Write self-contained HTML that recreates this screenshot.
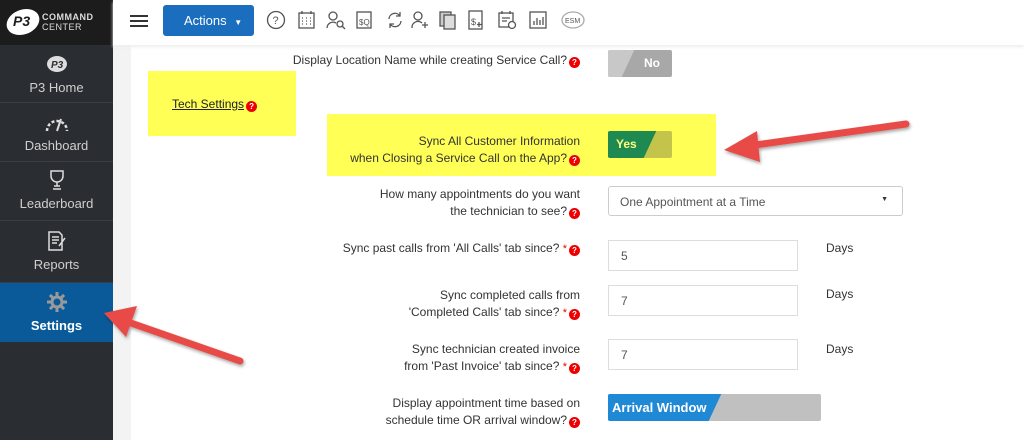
<!DOCTYPE html>
<html><head><meta charset="utf-8">
<style>
*{margin:0;padding:0;box-sizing:border-box}
body{width:1024px;height:440px;overflow:hidden;background:#fff;font-family:"Liberation Sans",sans-serif;position:relative;color:#333}
.a{position:absolute}
#side{left:0;top:0;width:113px;height:440px;background:#2a2d31}
#logo{left:0;top:0;width:113px;height:45px;background:#1c1c1c}
.nav{position:absolute;left:0;width:113px;text-align:center;color:#cfcfcf;font-size:13px;border-bottom:1px solid #3a3d42}
.nav svg{display:block;margin:0 auto}
#gray{left:113px;top:45px;width:18px;height:395px;background:#f3f3f3}
#hdr{left:113px;top:0;width:911px;height:45px;background:#fff;box-shadow:0 2px 3px #eee}
.lbl{position:absolute;text-align:right;font-size:12px;color:#333;line-height:17px;width:440px}
.q{display:inline-block;width:11px;height:11px;border-radius:50%;background:#e00;color:#fff;font-size:8px;line-height:11px;text-align:center;font-weight:bold;vertical-align:-1px;margin-left:2px}
.st{color:#e00;font-size:11px}
.inp{position:absolute;left:608px;width:190px;height:31px;border:1px solid #ddd;font-size:12px;color:#555;padding:8px 12px}
.days{position:absolute;left:826px;font-size:12px}
.ic{position:absolute;top:10px;stroke:#555;fill:none;stroke-width:1.3}
</style></head><body>
<div id="side" class="a"></div>
<div id="logo" class="a">
<div class="a" style="left:7px;top:9px;width:32px;height:26px;border-radius:50%;background:#fff;transform:skewX(-15deg)"></div>
<div class="a" style="left:13px;top:13px;font-size:14px;font-weight:bold;font-style:italic;color:#1c1c1c">P3</div>
<div class="a" style="left:42px;top:12px;font-size:9px;color:#ddd;font-weight:bold;letter-spacing:0.5px;line-height:10px">COMMAND<br><span style="font-weight:normal">CENTER</span></div>
</div>
<div class="nav" style="top:45px;height:58px"><svg width="24" height="22" style="margin-top:8px"><ellipse cx="12" cy="11" rx="10" ry="8" fill="#ddd"/><text x="6" y="15" font-size="10" font-weight="bold" fill="#2a2d31" font-style="italic">P3</text></svg><div style="margin-top:5px">P3 Home</div></div>
<div class="nav" style="top:103px;height:59px"><svg width="26" height="22" style="margin-top:8px"><path d="M3 20 A10 10 0 0 1 23 20" stroke="#ddd" stroke-width="2.5" fill="none" stroke-dasharray="3 2"/><path d="M13 20 L17 8" stroke="#ddd" stroke-width="2"/></svg><div style="margin-top:5px">Dashboard</div></div>
<div class="nav" style="top:162px;height:59px"><svg width="20" height="22" style="margin-top:7px"><path d="M4 2h12v5a6 6 0 0 1-12 0z M10 13v4 M6 20h8 M7 17h6" stroke="#ddd" stroke-width="1.5" fill="none"/></svg><div style="margin-top:5px">Leaderboard</div></div>
<div class="nav" style="top:221px;height:62px"><svg width="22" height="22" style="margin-top:9px"><path d="M3 2h10l3 3v15H3z M6 7h7 M6 10h7 M6 13h5 M13 16l6-8" stroke="#ddd" stroke-width="1.5" fill="none"/></svg><div style="margin-top:5px">Reports</div></div>
<div class="nav" style="top:283px;height:59px;background:#0a5a99;color:#fff;border:none"><svg width="22" height="22" style="margin-top:8px"><g fill="#999"><circle cx="11" cy="11" r="6.5"/><rect x="9.5" y="1" width="3" height="20"/><rect x="1" y="9.5" width="20" height="3"/><rect x="9.5" y="1" width="3" height="20" transform="rotate(45 11 11)"/><rect x="9.5" y="1" width="3" height="20" transform="rotate(-45 11 11)"/></g><circle cx="11" cy="11" r="3.5" fill="#0a5a99"/></svg><div style="margin-top:5px;font-weight:bold">Settings</div></div>
<div id="gray" class="a"></div>
<div id="hdr" class="a"></div>
<div class="a" style="left:130px;top:15px;width:18px;height:2px;background:#333;box-shadow:0 5px 0 #333,0 10px 0 #333"></div>
<div class="a" style="left:163px;top:5px;width:91px;height:31px;background:#1a6ebd;border-radius:3px;color:#fff;font-size:13px;line-height:31px;padding-left:21px">Actions <span style="font-size:8px;margin-left:4px">▼</span></div>
<svg class="ic" style="left:266px" width="20" height="20"><circle cx="10" cy="10" r="8.5"/><text x="6.5" y="14" font-size="11" fill="#555" stroke="none">?</text></svg>
<svg class="ic" style="left:297px" width="20" height="20"><rect x="2" y="3" width="15" height="15"/><path d="M5 1v3M14 1v3M5 8h1M9 8h1M13 8h1M5 11h1M9 11h1M13 11h1M5 14h1M9 14h1M13 14h1"/></svg>
<svg class="ic" style="left:326px" width="20" height="20"><circle cx="7" cy="6" r="4"/><path d="M1 18a6 6 0 0 1 9-5"/><circle cx="14" cy="14" r="3"/><path d="M16 16l3 3"/></svg>
<svg class="ic" style="left:355px" width="20" height="20"><rect x="2" y="2" width="14" height="16"/><text x="4" y="15" font-size="8" fill="#555" stroke="none">$Q</text></svg>
<svg class="ic" style="left:385px" width="20" height="20"><path d="M4 9a6 6 0 0 1 11-3M16 11a6 6 0 0 1-11 3M15 2v4h-4M5 18v-4h4"/></svg>
<svg class="ic" style="left:410px" width="20" height="20"><circle cx="8" cy="6" r="4"/><path d="M2 18a6 6 0 0 1 10-5M15 12v6M12 15h6"/></svg>
<svg class="ic" style="left:438px" width="20" height="20"><rect x="2" y="2" width="11" height="14" fill="#ccc"/><rect x="6" y="5" width="11" height="14" fill="#ddd"/></svg>
<svg class="ic" style="left:467px" width="20" height="20"><rect x="2" y="1" width="13" height="18"/><text x="4" y="15" font-size="9" fill="#555" stroke="none">$</text><path d="M12 12v5M10 14.5h5"/></svg>
<svg class="ic" style="left:497px" width="20" height="20"><rect x="2" y="3" width="14" height="14"/><path d="M5 1v3M13 1v3M5 8h8M5 11h5"/><circle cx="15" cy="15" r="3.5" fill="#fff"/></svg>
<svg class="ic" style="left:528px" width="20" height="20"><rect x="2" y="2" width="16" height="16"/><path d="M6 15v-4M9 15v-7M12 15v-5M15 15v-8"/></svg>
<svg class="ic" style="left:560px" width="26" height="20"><ellipse cx="13" cy="10" rx="11" ry="8" stroke="#aaa"/><text x="5" y="13" font-size="7" fill="#555" stroke="none">ESM</text></svg>

<div class="lbl" style="left:140px;top:52px">Display Location Name while creating Service Call?<span class="q">?</span></div>
<div class="a" style="left:608px;top:50px;width:64px;height:27px;background:#a8a8a8;border-radius:2px;overflow:hidden"><div class="a" style="left:-10px;top:0;width:30px;height:27px;background:#c8c8c8;transform:skewX(-25deg)"></div><div class="a" style="left:36px;top:6px;color:#fff;font-weight:bold;font-size:12px">No</div></div>

<div class="a" style="left:148px;top:71px;width:148px;height:65px;background:#ffff55"></div>
<div class="a" style="left:172px;top:97px;font-size:12px;text-decoration:underline;color:#222">Tech Settings<span class="q" style="text-decoration:none">?</span></div>

<div class="a" style="left:327px;top:114px;width:389px;height:62px;background:#ffff55"></div>
<div class="lbl" style="left:140px;top:133px">Sync All Customer Information<br>when Closing a Service Call on the App?<span class="q">?</span></div>
<div class="a" style="left:608px;top:131px;width:64px;height:27px;background:#c5c44a;border-radius:2px;overflow:hidden"><div class="a" style="left:-10px;top:0;width:52px;height:27px;background:#1e8a52;transform:skewX(-25deg)"></div><div class="a" style="left:8px;top:6px;color:#ffff80;font-weight:bold;font-size:12px">Yes</div></div>

<div class="lbl" style="left:140px;top:186px">How many appointments do you want<br>the technician to see?<span class="q">?</span></div>
<div class="a" style="left:608px;top:186px;width:295px;height:30px;border:1px solid #ccc;border-radius:3px;font-size:12px;color:#555;padding:8px 11px">One Appointment at a Time<span style="position:absolute;right:14px;top:9px;font-size:7px;color:#333">▼</span></div>

<div class="lbl" style="left:140px;top:240px">Sync past calls from 'All Calls' tab since? <span class="st">*</span><span class="q">?</span></div>
<div class="inp" style="top:240px">5</div><div class="days" style="top:241px">Days</div>

<div class="lbl" style="left:140px;top:287px">Sync completed calls from<br>'Completed Calls' tab since? <span class="st">*</span><span class="q">?</span></div>
<div class="inp" style="top:285px">7</div><div class="days" style="top:287px">Days</div>

<div class="lbl" style="left:140px;top:341px">Sync technician created invoice<br>from 'Past Invoice' tab since? <span class="st">*</span><span class="q">?</span></div>
<div class="inp" style="top:339px">7</div><div class="days" style="top:342px">Days</div>

<div class="lbl" style="left:140px;top:395px">Display appointment time based on<br>schedule time OR arrival window?<span class="q">?</span></div>
<div class="a" style="left:608px;top:394px;width:213px;height:27px;background:#c0c0c0;border-radius:2px;overflow:hidden"><div class="a" style="left:-10px;top:0;width:117px;height:27px;background:#2089d6;transform:skewX(-25deg)"></div><div class="a" style="left:4px;top:6px;color:#fff;font-weight:bold;font-size:13px">Arrival Window</div></div>

<svg class="a" style="left:0;top:0" width="1024" height="440">
<defs><filter id="sh"><feDropShadow dx="1" dy="2" stdDeviation="1.5" flood-opacity="0.35"/></filter></defs>
<g filter="url(#sh)" fill="#e84c46" stroke="#e84c46">
<line x1="906" y1="124" x2="748" y2="146" stroke-width="7" stroke-linecap="round"/>
<polygon points="724,150 757,131 760,162" stroke="none"/>
<line x1="240" y1="361" x2="128" y2="322" stroke-width="7" stroke-linecap="round"/>
<polygon points="104,313 137,306 126,337" stroke="none"/>
</g></svg>
</body></html>
